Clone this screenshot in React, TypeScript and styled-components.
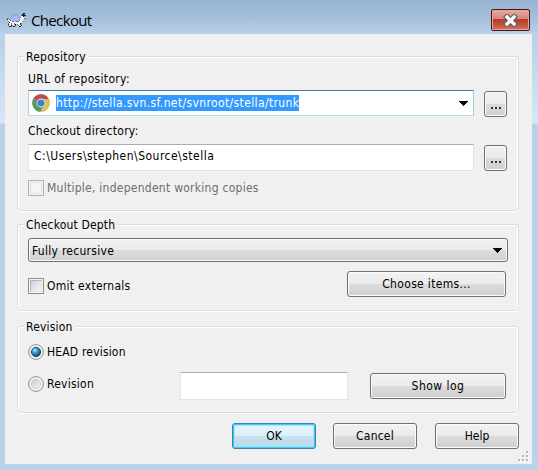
import React from "react";
import styled, { createGlobalStyle, css } from "styled-components";

const Global = createGlobalStyle`
  *, *::before { box-sizing: border-box; }
  body { margin: 0; overflow: hidden; }
`;

const Frame = styled.main`
  width: 538px;
  height: 470px;
  padding: 0 6px 6px 5px;
  background:
    linear-gradient(180deg, #99b4d1 0, #a5bfdc 18px, #b9d1ea 34px, #b9d1ea 40px, #d9e6f5 122px, #d9e6f5 123px, #b9d1ea 124px, #b9d1ea 100%);
  font-family: "DejaVu Sans Condensed", "DejaVu Sans", sans-serif;
  font-stretch: condensed;
  font-size: 12px;
  color: #000;
`;

const TitleBar = styled.header`
  display: flex;
  align-items: flex-start;
  height: 34px;
  margin: 0 -6px 0 -5px;
  padding: 9px 8px 0 7px;
  background: linear-gradient(180deg, #99b4d1 0, #a5bfdb 18px, #b9d1ea 34px);
`;

const Title = styled.h1`
  flex: 1;
  margin: 0 0 0 5px;
  font: 400 15px/22px "Open Sans", "Noto Sans", sans-serif;
  letter-spacing: -0.65px;
`;

const CloseButton = styled.button`
  display: grid;
  place-items: center;
  width: 39px;
  height: 22px;
  padding: 0;
  border: 1px solid #43141d;
  border-radius: 2px;
  box-shadow: inset 0 0 0 1px #e9a59c;
  background: linear-gradient(180deg, #eaaaa2 0, #d98478 9px, #b63c27 9px, #c4523d 15px, #d4786a 100%);
`;

const Client = styled.section`
  width: 527px;
  height: 430px;
  padding: 22px 13px 0 12px;
  background: #f0f0f0;
`;

const Group = styled.section<{ $h: number; $gap: number }>`
  height: ${(p) => p.$h}px;
  margin-bottom: ${(p) => p.$gap}px;
  padding: 0 10px;
  border: 1px solid #d5dfe5;
  border-radius: 3px;
  box-shadow: inset 1px 1px 0 #fff, inset -1px 0 0 #fff, 0 1px 0 #fff;
`;

const Legend = styled.h2`
  display: table;
  margin: -8px 0 0 -4px;
  padding: 0 2px;
  background: #f0f0f0;
  font: inherit;
`;

const Text = styled.span<{ $track?: number; $dim?: boolean }>`
  display: block;
  line-height: 16px;
  white-space: nowrap;
  letter-spacing: ${(p) => p.$track ?? 0}px;
  color: ${(p) => (p.$dim ? "#6d6d6d" : "inherit")};
`;

const Row = styled.div<{ $mt?: number; $h?: number; $gap?: number }>`
  display: flex;
  align-items: flex-start;
  gap: ${(p) => p.$gap ?? 0}px;
  height: ${(p) => (p.$h ? `${p.$h}px` : "auto")};
  margin-top: ${(p) => p.$mt ?? 0}px;
`;

const DepthRow = styled.div`
  display: grid;
  grid-template-columns: 319px 159px;
  align-items: start;
  margin-top: 9px;
`;

const RevisionRow = styled.div`
  display: grid;
  grid-template-columns: 152px 190px 136px;
  align-items: start;
  margin-top: 12px;
`;

const Field = styled.div<{ $w: number; $h: number; $active?: boolean }>`
  display: flex;
  align-items: flex-start;
  width: ${(p) => p.$w}px;
  height: ${(p) => p.$h}px;
  padding: 3px 5px 0 5px;
  border: 1px solid #e2e3ea;
  border-top-color: #abadb3;
  border-radius: 1px;
  background: #fff;
  ${(p) =>
    p.$active &&
    css`
      padding: 3px 5px 0 3px;
      border-color: #3d7bad #a4c9e3 #b7d9ed #b5cfe7;
    `}
`;

const Selection = styled(Text)`
  width: 243px;
  height: 16px;
  margin: 1px auto 0 6px;
  background: #3399ff;
  color: #fff;
`;

const face = css`
  border: 1px solid #707070;
  border-radius: 3px;
  box-shadow: inset 0 0 0 1px #fbfbfb;
  background: linear-gradient(180deg, #f2f2f2 0, #ebebeb 48%, #dddddd 48%, #cfcfcf 100%);
`;

const Button = styled.button<{ $w: number; $primary?: boolean }>`
  display: flex;
  justify-content: center;
  width: ${(p) => p.$w}px;
  height: 26px;
  padding: 4px 0 0;
  font: inherit;
  color: inherit;
  ${face}
  ${(p) =>
    p.$primary &&
    css`
      border-color: #3c7fb1;
      box-shadow: inset 0 0 0 1px #36cdf8, inset 0 0 0 2px #a6e4f7;
      background: linear-gradient(180deg, #e8f4fb 0, #deeff8 48%, #c8e2ef 48%, #b8d8e8 100%);
    `}
`;

const Dots = styled.span`
  width: 10px;
  height: 2px;
  margin-top: 11px;
  background: repeating-linear-gradient(90deg, #3b3130 0 2px, transparent 2px 4px);
`;

const Select = styled.div`
  display: flex;
  justify-content: space-between;
  width: 480px;
  height: 24px;
  padding: 4px 5px 0 3px;
  ${face}
`;

const Check = styled.span<{ $dim?: boolean }>`
  flex: none;
  width: 16px;
  height: 16px;
  margin-right: 3px;
  padding: 1px;
  border: 1px solid ${(p) => (p.$dim ? "#b1b1b1" : "#8e8f8f")};
  background: #f4f4f4;

  &::before {
    content: "";
    display: block;
    width: 12px;
    height: 12px;
    border: 1px solid ${(p) => (p.$dim ? "#dddde0" : "#b5bac0")};
    border-right-color: #e1e3e6;
    border-bottom-color: #e1e3e6;
    background: ${(p) => (p.$dim ? "#f4f4f6" : "linear-gradient(135deg, #cdd1d7, #f6f6f6)")};
  }
`;

const Icon = styled.svg`
  display: block;
  flex: none;
`;

const Footer = styled.footer`
  display: grid;
  grid-template-columns: 84px 85px 84px;
  justify-content: end;
  column-gap: 17px;
`;

const GripRow = styled.div`
  display: flex;
  justify-content: flex-end;
  margin: 2px -11px 0 0;
`;

const turtlePixels: Record<string, string> = {
  b: "#a3b9f6",
  c: "#7f9ae2",
  w: "#f6f6f2",
  k: "#172338",
  g: "#78787c",
  t: "#167b80",
};

const turtleRows = [
  "................kk.",
  "......cccc.....kkt.",
  ".....cbbbbc...gkkkk",
  "....cbbbbbbc..wwkg.",
  "....bbbbbbbb.gwwww.",
  "gg.cbbbbbbbbcwwwwgg",
  "kwgbbbbbbbbbbwww...",
  ".wwgbbbbbbbbgwww...",
  ".gwwwggbbgggwwwg...",
  "..kwwwwwwwwwwww....",
  ".gwwgwwgwwwwwkg....",
  ".kwwgwwgk.gwwk.....",
  ".gwwkgwwk..gwwk....",
  "..kkg.kk....kk.....",
];

const Turtle = () => (
  <Icon width="19" height="14" viewBox="0 0 19 14" shapeRendering="crispEdges">
    {turtleRows.flatMap((row, y) =>
      [...row].map((c, x) =>
        c === "." ? null : <rect key={`${x}-${y}`} x={x} y={y} width="1" height="1" fill={turtlePixels[c]} />
      )
    )}
  </Icon>
);

const TurtleSlot = styled.span`
  padding-top: 4px;
`;

const Cross = () => (
  <Icon width="15" height="13" viewBox="0 0 15 13">
    <path d="M4 3 L11 10 M11 3 L4 10" stroke="#565a66" strokeWidth="5.6" strokeLinecap="square" />
    <path d="M4 3 L11 10 M11 3 L4 10" stroke="#f8f8f8" strokeWidth="3.4" strokeLinecap="square" />
  </Icon>
);

const Chrome = () => (
  <Icon width="18" height="18" viewBox="0 0 18 18">
    <circle cx="9" cy="9" r="8.8" fill="#e0c04e" />
    <path d="M9 9 L1.3 4.8 A8.8 8.8 0 0 1 17 5.2 L9 5.2Z" fill="#bb4c56" />
    <path d="M1.3 4.8 A8.8 8.8 0 0 0 8.4 17.8 L12.2 11 L9 9Z" fill="#58986a" />
    <path d="M9 5.2 H17 A8.8 8.8 0 0 1 8.4 17.8 L12.3 11Z" fill="#dfc05b" />
    <circle cx="9" cy="9" r="4.4" fill="#eef0ee" />
    <circle cx="9" cy="9" r="3.6" fill="#3c83c9" />
  </Icon>
);

const ArrowSlot = styled.span<{ $mt: number }>`
  padding-top: ${(p) => p.$mt}px;
`;

const Arrow = () => (
  <Icon width="9" height="5" viewBox="0 0 9 5" shapeRendering="crispEdges">
    <path d="M0 0H9V1H8V2H7V3H6V4H5V5H4V4H3V3H2V2H1V1H0Z" />
  </Icon>
);

const RadioSlot = styled.span`
  width: 16px;
  margin-right: 3px;
`;

const Radio = ({ on }: { on?: boolean }) => (
  <RadioSlot>
    <Icon width="16" height="16" viewBox="0 0 16 16">
      <defs>
        <radialGradient id="dot" cx="0.38" cy="0.32" r="0.7">
          <stop offset="0" stopColor="#c2f2fc" />
          <stop offset="0.35" stopColor="#35a6d3" />
          <stop offset="1" stopColor="#0b3f64" />
        </radialGradient>
        <linearGradient id="well" x1="0" y1="0" x2="1" y2="1">
          <stop offset="0" stopColor="#c3c6ca" />
          <stop offset="1" stopColor="#f7f7f7" />
        </linearGradient>
      </defs>
      <circle cx="8" cy="8" r="7.4" fill="#f4f4f4" stroke="#8e8f8f" />
      <circle cx="8" cy="8" r="4.7" fill={on ? "url(#dot)" : "url(#well)"} stroke={on ? "#193e57" : "#c3c7cb"} strokeWidth="0.8" />
    </Icon>
  </RadioSlot>
);

const Grip = () => (
  <Icon width="12" height="12" viewBox="0 0 12 12" shapeRendering="crispEdges">
    {[[8, 0], [4, 4], [8, 4], [0, 8], [4, 8], [8, 8]].map(([x, y]) => (
      <g key={`${x}-${y}`}>
        <rect x={x + 1} y={y + 1} width="2" height="2" fill="#fff" />
        <rect x={x} y={y} width="2" height="2" fill="#b8b8b8" />
      </g>
    ))}
  </Icon>
);

export default function App() {
  return (
    <>
      <Global />
      <Frame>
        <TitleBar>
          <TurtleSlot><Turtle /></TurtleSlot>
          <Title>Checkout</Title>
          <CloseButton aria-label="Close"><Cross /></CloseButton>
        </TitleBar>
        <Client>
          <Group $h={155} $gap={13}>
            <Legend><Text $track={0.25}>Repository</Text></Legend>
            <Row $mt={6} $h={19}><Text $track={0.33}>URL of repository:</Text></Row>
            <Row $gap={10}>
              <Field $w={446} $h={26} $active>
                <Chrome />
                <Selection $track={0.37}>http://stella.svn.sf.net/svnroot/stella/trunk</Selection>
                <ArrowSlot $mt={7}><Arrow /></ArrowSlot>
              </Field>
              <Row $mt={1}><Button $w={23} aria-label="Browse"><Dots /></Button></Row>
            </Row>
            <Row $mt={6} $h={21}><Text $track={0.3}>Checkout directory:</Text></Row>
            <Row $gap={10}>
              <Field $w={446} $h={27}><Text $track={0.48}>C:\Users\stephen\Source\stella</Text></Field>
              <Row $mt={1}><Button $w={23} aria-label="Browse"><Dots /></Button></Row>
            </Row>
            <Row $mt={9}><Check $dim /><Text $dim $track={0.26}>Multiple, independent working copies</Text></Row>
          </Group>
          <Group $h={87} $gap={15}>
            <Legend><Text $track={0.18}>Checkout Depth</Text></Legend>
            <Row $mt={5}><Select><Text $track={0.28}>Fully recursive</Text><ArrowSlot $mt={5}><Arrow /></ArrowSlot></Select></Row>
            <DepthRow>
              <Row $mt={7}><Check /><Text $track={0.27}>Omit externals</Text></Row>
              <Button $w={159}><Text $track={0.33}>Choose items...</Text></Button>
            </DepthRow>
          </Group>
          <Group $h={87} $gap={10}>
            <Legend><Text $track={0.2}>Revision</Text></Legend>
            <Row $mt={9}><Radio on /><Text $track={0.18}>HEAD revision</Text></Row>
            <RevisionRow>
              <Row $mt={4}><Radio /><Text $track={0.25}>Revision</Text></Row>
              <Field $w={168} $h={28} />
              <Row $mt={1}><Button $w={136}><Text $track={0.48}>Show log</Text></Button></Row>
            </RevisionRow>
          </Group>
          <Footer>
            <Button $w={84} $primary><Text>OK</Text></Button>
            <Button $w={84}><Text $track={0.2}>Cancel</Text></Button>
            <Button $w={84}><Text>Help</Text></Button>
          </Footer>
          <GripRow><Grip /></GripRow>
        </Client>
      </Frame>
    </>
  );
}
